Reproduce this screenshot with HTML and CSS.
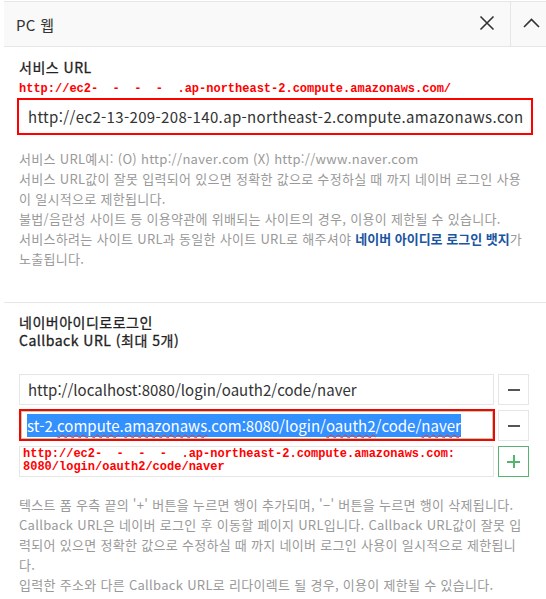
FILE: index.html
```html
<!DOCTYPE html>
<html lang="ko">
<head>
<meta charset="utf-8">
<title>PC 웹</title>
<link rel="stylesheet" href="styles.css">
</head>
<body>
<div class="panel">
  <div class="head">
    <span class="title">PC 웹</span>
    <button class="hbtn close" aria-label="닫기">
      <svg width="16" height="16" viewBox="0 0 16 16"><path d="M1.5 1.5 L14.5 14.5 M14.5 1.5 L1.5 14.5" stroke="#333" stroke-width="1.6" fill="none"/></svg>
    </button>
    <button class="hbtn toggle" aria-label="접기">
      <svg width="17" height="10" viewBox="0 0 17 10"><path d="M1 9 L8.5 1.5 L16 9" stroke="#333" stroke-width="1.6" fill="none"/></svg>
    </button>
  </div>

  <section class="sec sec1">
    <div class="label">서비스 URL</div>
    <div class="anno">http://ec2-  -  -  -  .ap-northeast-2.compute.amazonaws.com/</div>
    <div class="field big marked">http://ec2-13-209-208-140.ap-northeast-2.compute.amazonaws.con</div>
    <div class="help">
      <p>서비스 URL예시: (O) http://naver.com (X) http://www.naver.com</p>
      <p>서비스 URL값이 잘못 입력되어 있으면 정확한 값으로 수정하실 때 까지 네이버 로그인 사용이 일시적으로 제한됩니다.</p>
      <p>불법/음란성 사이트 등 이용약관에 위배되는 사이트의 경우, 이용이 제한될 수 있습니다.</p>
      <p>서비스하려는 사이트 URL과 동일한 사이트 URL로 해주셔야 <strong class="link">네이버 아이디로 로그인 뱃지</strong>가 노출됩니다.</p>
    </div>
  </section>

  <section class="sec sec2">
    <div class="label two">네이버아이디로로그인<br>Callback URL (최대 5개)</div>
    <div class="rows">
      <div class="row">
        <div class="field">http://localhost:8080/login/oauth2/code/naver</div>
        <button class="sq" aria-label="삭제"><span class="minus"></span></button>
      </div>
      <div class="row">
        <div class="field focus marked"><span class="sel">st-2.<span class="sp">compute</span>.<span class="sp">amazonaws</span>.com:8080/login/<span class="sp">oauth2</span>/code/<span class="sp">naver</span></span></div>
        <button class="sq" aria-label="삭제"><span class="minus"></span></button>
      </div>
      <div class="row">
        <div class="field note"><span class="anno">http://ec2-  -  -  -  .ap-northeast-2.compute.amazonaws.com:
8080/login/oauth2/code/naver</span></div>
        <button class="sq add" aria-label="추가"><span class="plus"></span></button>
      </div>
    </div>
    <div class="help help2">
      <p>텍스트 폼 우측 끝의 '+' 버튼을 누르면 행이 추가되며, '−' 버튼을 누르면 행이 삭제됩니다.</p>
      <p>Callback URL은 네이버 로그인 후 이동할 페이지 URL입니다. Callback URL값이 잘못 입력되어 있으면 정확한 값으로 수정하실 때 까지 네이버 로그인 사용이 일시적으로 제한됩니다.</p>
      <p>입력한 주소와 다른 Callback URL로 리다이렉트 될 경우, 이용이 제한될 수 있습니다.</p>
    </div>
  </section>
</div>
</body>
</html>
```

FILE: styles.css
```css
html, body {
  margin: 0;
  padding: 0;
  background: #fff;
  overflow: hidden;
}
body {
  font-family: "Noto Sans CJK KR", "Noto Sans", sans-serif;
  color: #333;
}
.panel {
  margin: 1px 0 0 4px;
  border-top: 1px solid #e6e6e6;
}
.head {
  display: flex;
  align-items: stretch;
  height: 44px;
  background: #f9f9f9;
  border-bottom: 1px solid #e6e6e6;
}
.title {
  flex: 1;
  display: flex;
  align-items: center;
  padding-left: 12px;
  font-size: 15px;
  letter-spacing: 0.3px;
  color: #333;
}
.hbtn {
  border: 0;
  background: transparent;
  padding: 0;
  display: flex;
  align-items: center;
  cursor: pointer;
}
.hbtn.close {
  width: 46px;
  justify-content: center;
  padding-bottom: 2px;
}
.hbtn.toggle {
  width: 36px;
  border-left: 1px solid #e6e6e6;
  justify-content: flex-start;
  padding-left: 12px;
  padding-bottom: 2px;
}
.sec {
  padding: 0 15px 0 15px;
}
.sec1 {
  padding-top: 11px;
  padding-bottom: 33px;
}
.sec2 {
  border-top: 1px solid #e6e6e6;
  padding-top: 10px;
}
.label {
  font-size: 14px;
  line-height: 18px;
  font-weight: 400;
  letter-spacing: 0.5px;
  color: #222;
  -webkit-text-stroke: 0.3px #222;
}
.anno {
  font-family: "Liberation Mono", "DejaVu Sans Mono", monospace;
  font-weight: bold;
  font-size: 12px;
  line-height: 14px;
  letter-spacing: 0;
  color: #f00;
  white-space: pre;
}
.sec1 .anno {
  margin-top: 6px;
}
.field {
  box-sizing: border-box;
  border: 1px solid #e6e6e6;
  background: #fff;
  font-size: 15px;
  color: #333;
  white-space: nowrap;
  overflow: hidden;
  display: flex;
  align-items: center;
  padding-left: 8px;
}
.field.big {
  margin: 2px -2px 0 -2px;
  height: 37px;
  border: 2px solid #f00;
  padding-left: 9px;
  letter-spacing: 0.34px;
}
.help {
  margin-top: 14px;
  font-size: 13px;
  line-height: 20px;
  letter-spacing: 0.3px;
  color: #999;
}
.help p {
  margin: 0;
}
.link {
  color: #1a56a0;
  font-weight: bold;
  letter-spacing: 0;
}
.label.two {
  margin-bottom: 25px;
}
.rows {
  display: flex;
  flex-direction: column;
  gap: 5px;
  margin-right: 2px;
}
.row {
  display: flex;
  gap: 4px;
  height: 31px;
}
.row .field {
  flex: 1;
  height: 31px;
}
.field.focus {
  height: 32px;
  margin: -1px -1px 0 0;
  border: 2px solid #f00;
  box-shadow: inset 0 0 0 1px #a6d6ae;
  padding-left: 6px;
}
.sel {
  background: #3390ff;
  color: #fff;
  line-height: 23px;
}
.sp {
  text-decoration: underline wavy #e33;
  text-decoration-thickness: 1px;
  text-underline-offset: 2px;
}
.field.note {
  align-items: flex-start;
  padding: 1px 0 0 3px;
}
.field.note .anno {
  line-height: 13px;
}
.sq {
  box-sizing: border-box;
  width: 31px;
  height: 31px;
  flex: none;
  border: 1px solid #e6e6e6;
  background: #fff;
  padding: 0;
  display: flex;
  align-items: center;
  justify-content: center;
  cursor: pointer;
}
.sq.add {
  border-color: #55b470;
}
.minus {
  display: block;
  width: 12px;
  height: 2px;
  background: #555;
}
.plus {
  position: relative;
  display: block;
  width: 13px;
  height: 13px;
}
.plus::before,
.plus::after {
  content: "";
  position: absolute;
  background: #55b470;
}
.plus::before {
  left: 0;
  top: 6px;
  width: 13px;
  height: 1.5px;
}
.plus::after {
  top: 0;
  left: 6px;
  width: 1.5px;
  height: 13px;
}
.help2 {
  margin-top: 18px;
}
```
